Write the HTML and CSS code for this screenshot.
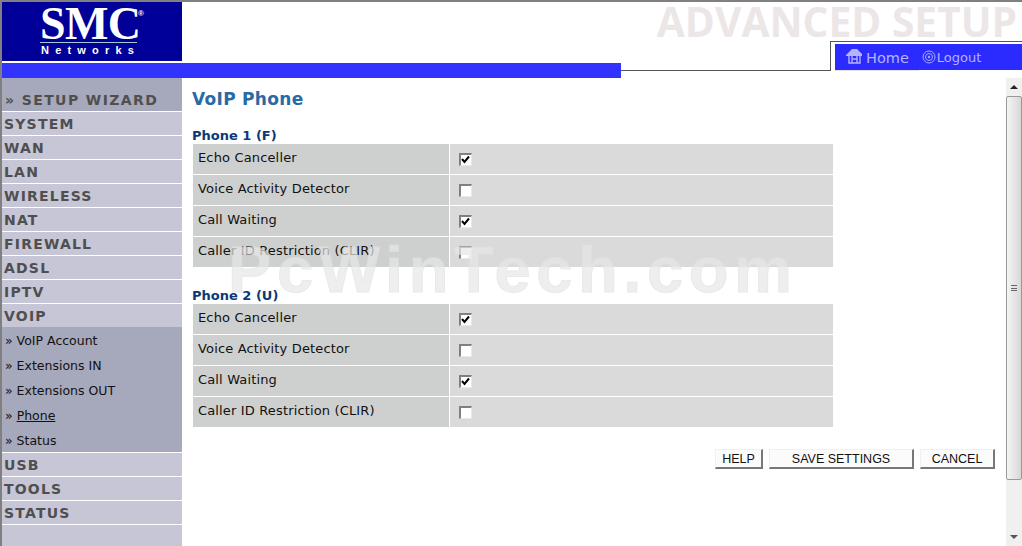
FILE: index.html
```html
<!DOCTYPE html>
<html lang="en">
<head>
    <meta charset="UTF-8">
    <title>Advanced Setup</title>
    <link rel="stylesheet" href="styles.css">
</head>
<body>
<div class="page">
    <!-- Header -->
    <div class="header">
        <div class="top">
            <div class="logo">
                <div class="logo-smc">SMC<span class="logo-reg">®</span></div>
                <div class="logo-net">Networks</div>
            </div>
            <div class="page-name">ADVANCED SETUP</div>
        </div>
        <div class="strip">
            <div class="bar"></div>
            <div class="line"></div>
        </div>
        <div class="nav-tab">
            <div class="nav-inner">
                <a class="nav-home">
                    <svg class="home-icon" width="17" height="16" viewBox="0 0 17 16">
                        <path d="M0 7 L6 1 H11 L16 6 V8 H0 Z" fill="#b4b4ff"/>
                        <path d="M3 8 V15 H14 V8 M6 8 V15 M11 8 V15 M6 11 H11" fill="none" stroke="#b4b4ff" stroke-width="1.4"/>
                    </svg>
                    Home
                </a>
                <a class="nav-logout">
                    <svg width="14" height="14" viewBox="0 0 14 14">
                        <circle cx="7" cy="7" r="6" fill="none" stroke="#a8a8ff" stroke-width="1"/>
                        <circle cx="7" cy="7" r="3.5" fill="none" stroke="#a8a8ff" stroke-width="1"/>
                        <circle cx="7" cy="7" r="1.2" fill="#a8a8ff"/>
                    </svg>
                    Logout
                </a>
            </div>
            <div class="nav-under"></div>
        </div>
    </div>

    <div class="body-row">
        <!-- Menu -->
        <div class="sidebar">
            <div class="wizard">» SETUP WIZARD</div>
            <div class="menu-item">SYSTEM</div>
            <div class="menu-item">WAN</div>
            <div class="menu-item">LAN</div>
            <div class="menu-item">WIRELESS</div>
            <div class="menu-item">NAT</div>
            <div class="menu-item">FIREWALL</div>
            <div class="menu-item">ADSL</div>
            <div class="menu-item">IPTV</div>
            <div class="menu-item">VOIP</div>
            <div class="submenu">
                <div class="sub-item">» VoIP Account</div>
                <div class="sub-item">» Extensions IN</div>
                <div class="sub-item">» Extensions OUT</div>
                <div class="sub-item">» <u>Phone</u></div>
                <div class="sub-item">» Status</div>
            </div>
            <div class="menu-item">USB</div>
            <div class="menu-item">TOOLS</div>
            <div class="menu-item">STATUS</div>
        </div>

        <!-- Content -->
        <div class="content">
            <h1 class="title">VoIP Phone</h1>

            <h2 class="phone-head">Phone 1 (F)</h2>
            <div class="phone-table">
                <div class="row"><div class="label">Echo Canceller</div><div class="value"><input class="chk" type="checkbox" checked></div></div>
                <div class="row"><div class="label">Voice Activity Detector</div><div class="value"><input class="chk" type="checkbox"></div></div>
                <div class="row"><div class="label">Call Waiting</div><div class="value"><input class="chk" type="checkbox" checked></div></div>
                <div class="row"><div class="label">Caller ID Restriction (CLIR)</div><div class="value"><input class="chk" type="checkbox"></div></div>
            </div>

            <h2 class="phone-head second">Phone 2 (U)</h2>
            <div class="phone-table">
                <div class="row"><div class="label">Echo Canceller</div><div class="value"><input class="chk" type="checkbox" checked></div></div>
                <div class="row"><div class="label">Voice Activity Detector</div><div class="value"><input class="chk" type="checkbox"></div></div>
                <div class="row"><div class="label">Call Waiting</div><div class="value"><input class="chk" type="checkbox" checked></div></div>
                <div class="row"><div class="label">Caller ID Restriction (CLIR)</div><div class="value"><input class="chk" type="checkbox"></div></div>
            </div>

            <div class="buttons">
                <button class="btn btn-help">HELP</button>
                <button class="btn btn-save">SAVE SETTINGS</button>
                <button class="btn btn-cancel">CANCEL</button>
            </div>
        </div>

        <!-- Scrollbar -->
        <div class="scrollbar">
            <div class="scroll-btn"><span class="arrow-up"></span></div>
            <div class="scroll-thumb"><span class="grip"></span></div>
            <div class="scroll-track"></div>
            <div class="scroll-btn"><span class="arrow-down"></span></div>
        </div>
    </div>

    <div class="watermark">PcWinTech.com</div>
</div>
</body>
</html>
```

FILE: styles.css
```css
* {
    margin: 0;
    padding: 0;
    box-sizing: border-box;
}

html, body {
    height: 546px;
    overflow: hidden;
    background: white;
    font-family: "DejaVu Sans", Verdana, sans-serif;
}

.page {
    position: relative;
    display: flex;
    flex-direction: column;
    height: 546px;
    border-top: 2px solid #808080;
    border-left: 2px solid #808080;
}

/* Header */
.header {
    position: relative;
    height: 76px;
}

.top {
    display: flex;
    height: 59px;
}

.logo {
    width: 180px;
    height: 59px;
    background: #000099;
    color: white;
}

.logo-smc {
    position: relative;
    width: 97px;
    height: 41px;
    margin-left: 38px;
    padding-top: 3px;
    font-family: "Liberation Serif", serif;
    font-size: 46px;
    font-weight: bold;
    line-height: 38px;
    letter-spacing: -0.6px;
    border-bottom: 1px solid #9ccbd6;
}

.logo-reg {
    position: absolute;
    top: 7px;
    right: -7px;
    font-family: "Liberation Sans", sans-serif;
    font-size: 8px;
    line-height: 10px;
    letter-spacing: 0;
}

.logo-net {
    margin-top: 1px;
    margin-left: 39px;
    font-family: "Liberation Sans", sans-serif;
    font-size: 11px;
    font-weight: bold;
    line-height: 13px;
    letter-spacing: 6.2px;
}

.page-name {
    flex: 1;
    padding-right: 5px;
    font-family: "Open Sans", sans-serif;
    font-size: 40.7px;
    font-weight: bold;
    line-height: 38px;
    text-align: right;
    white-space: nowrap;
    color: #ece6e6;
}

.strip {
    display: flex;
    margin-top: 2px;
    height: 15px;
}

.bar {
    width: 619px;
    height: 15px;
    background: #3333ff;
}

.line {
    width: 209px;
    height: 8px;
    border-bottom: 1px solid #555;
}

.nav-tab {
    position: absolute;
    top: 39px;
    left: 828px;
    right: 0;
    height: 30px;
    padding: 2px 0 0 4px;
    border-top: 1px solid #555;
    border-left: 1px solid #555;
}

.nav-inner {
    display: flex;
    align-items: center;
    gap: 13px;
    height: 26px;
    padding-left: 11px;
    background: #2b2bff;
    color: #b4b4ff;
}

.nav-under {
    width: 84px;
    height: 1px;
    background: #e8e2e2;
}

.nav-inner a {
    display: flex;
    align-items: center;
}

.nav-home {
    gap: 3px;
    padding-top: 1px;
    font-size: 14.5px;
}

.home-icon {
    margin-top: -3px;
}

.nav-logout {
    gap: 1px;
    font-size: 13px;
}

/* Main row */
.body-row {
    display: flex;
    flex: 1;
    min-height: 0;
}

.sidebar {
    width: 180px;
    background: #c6c6d6;
    color: #4f4f4f;
    font-weight: bold;
}

.wizard {
    height: 34px;
    padding: 13px 0 0 3px;
    background: #a6a8bc;
    border-bottom: 1px solid white;
    font-size: 14px;
    line-height: 18px;
    letter-spacing: 1.4px;
}

.menu-item {
    height: 24px;
    padding: 1px 0 0 2px;
    border-bottom: 1px solid white;
    font-size: 14px;
    line-height: 23px;
    letter-spacing: 1.2px;
}

.submenu {
    height: 126px;
    margin-top: -1px;
    padding-top: 1px;
    background: #a6a8bc;
    border-bottom: 1px solid white;
}

.sub-item {
    height: 25px;
    padding-left: 3px;
    color: #111;
    font-size: 12.5px;
    font-weight: normal;
    line-height: 25px;
}

.content {
    flex: 1;
    padding: 11px 0 0 10px;
}

.title {
    height: 36px;
    color: #2a6ba5;
    font-size: 17px;
    font-weight: bold;
    line-height: 20px;
    letter-spacing: 0.3px;
}

.phone-head {
    height: 19px;
    padding-top: 4px;
    color: #0b3a73;
    font-size: 13px;
    font-weight: bold;
    line-height: 14px;
}

.phone-head.second {
    margin-top: 18px;
}

.phone-table {
    width: 640px;
    margin-left: 1px;
}

.row {
    display: flex;
    height: 31px;
    border-bottom: 1px solid white;
}

.row:last-child {
    height: 30px;
    border-bottom: 0;
}

.label {
    width: 256px;
    padding: 5px 0 0 5px;
    background: #cdd0cf;
    color: #111;
    font-size: 13px;
    line-height: 17px;
    letter-spacing: 0.15px;
}

.value {
    flex: 1;
    margin-left: 1px;
    padding: 9px 0 0 9px;
    background: #dadada;
}

.chk {
    display: block;
    width: 13px;
    height: 13px;
    appearance: none;
    background: white;
    border-top: 2px solid #808080;
    border-left: 2px solid #808080;
    border-right: 1px solid #e8e8e8;
    border-bottom: 1px solid #e8e8e8;
}

.chk:checked {
    background: white url("data:image/svg+xml,%3Csvg xmlns='http://www.w3.org/2000/svg' width='10' height='10'%3E%3Cpath d='M1 4 L3.5 7 L8 1.5' fill='none' stroke='black' stroke-width='2'/%3E%3C/svg%3E") no-repeat center;
}

.buttons {
    display: flex;
    gap: 6px;
    width: 803px;
    margin-top: 22px;
    justify-content: flex-end;
}

.btn {
    height: 20px;
    background: #fbfbfb;
    border: 1px solid #f0f0f0;
    border-right: 2px solid #777;
    border-bottom: 2px solid #777;
    font-family: "Liberation Sans", Arial, sans-serif;
    font-size: 12.5px;
    color: #111;
}

.btn-help {
    width: 48px;
}

.btn-save {
    width: 145px;
}

.btn-cancel {
    width: 75px;
}

/* Scrollbar */
.scrollbar {
    display: flex;
    flex-direction: column;
    width: 16px;
    background: #f0f0f0;
}

.scroll-btn {
    display: flex;
    align-items: center;
    justify-content: center;
    height: 18px;
}

.arrow-up {
    width: 0;
    height: 0;
    border-left: 4px solid transparent;
    border-right: 4px solid transparent;
    border-bottom: 4px solid #222;
}

.arrow-down {
    width: 0;
    height: 0;
    border-left: 4px solid transparent;
    border-right: 4px solid transparent;
    border-top: 4px solid #555;
}

.scroll-thumb {
    display: flex;
    align-items: center;
    justify-content: center;
    height: 384px;
    background: linear-gradient(to right, #f4f4f4, #d8d8d8);
    border: 1px solid #999;
    border-radius: 2px;
}

.grip {
    width: 6px;
    height: 6px;
    border-top: 1px solid #666;
    border-bottom: 1px solid #666;
    background: linear-gradient(to bottom, transparent 2px, #666 2px, #666 3px, transparent 3px);
}

.scroll-track {
    flex: 1;
}

/* Watermark di atas konten */
.watermark {
    position: absolute;
    top: 233px;
    left: 226px;
    color: #e8e8e8;
    opacity: 0.7;
    font-family: "Liberation Sans", sans-serif;
    font-size: 65px;
    font-weight: bold;
    line-height: 70px;
    letter-spacing: 5.6px;
    white-space: nowrap;
    pointer-events: none;
    -webkit-text-stroke: 1px #e0e0e0;
}
```
